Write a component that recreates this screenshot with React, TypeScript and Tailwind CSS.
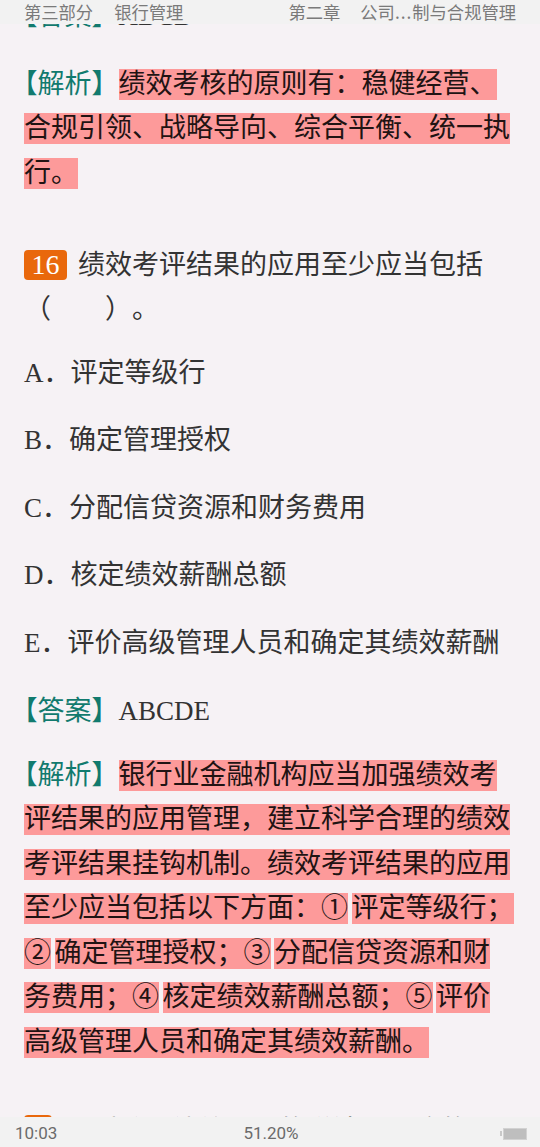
import React from 'react';

const textFont = "font-['Liberation_Serif','Noto_Sans_CJK_SC',serif]";

function Tag({ children }: { children: React.ReactNode }) {
  return (
    <span className="leading-[31px] text-[#117a6e]">
      <span className="[font-feature-settings:'halt']">【</span>
      {children}】
    </span>
  );
}

function Hl({ children, gap }: { children: React.ReactNode; gap?: boolean }) {
  return (
    <span className={`h-[31px] leading-[31px] bg-[#fd9a9a] text-[#211313] ${gap ? 'ml-[3.5px]' : ''}`}>
      {children}
    </span>
  );
}

function Row({ children, className = '' }: { children: React.ReactNode; className?: string }) {
  return <div className={`flex items-center h-[44.5px] whitespace-nowrap ${className}`}>{children}</div>;
}

function Badge({ n }: { n: number }) {
  return (
    <span className="flex items-center justify-center w-[43px] h-[30px] rounded-[4px] bg-[#e9680c] text-white text-[28px] leading-none font-['Liberation_Serif',serif]">
      {n}
    </span>
  );
}

export default function App() {
  const options = [
    'A．评定等级行',
    'B．确定管理授权',
    'C．分配信贷资源和财务费用',
    'D．核定绩效薪酬总额',
    'E．评价高级管理人员和确定其绩效薪酬',
  ];

  return (
    <div className="w-[540px] h-[1147px] flex flex-col overflow-hidden bg-[#f6f2f5]">
      {/* top header */}
      <div className="relative z-10 h-6 shrink-0 bg-[#f2f2f2] flex items-center justify-between pl-6 pr-[24px] text-[17.3px] leading-none text-[#7a7a7a] font-['Noto_Sans_CJK_SC',sans-serif] [text-spacing-trim:space-all]">
        <div className="flex gap-[21px]">
          <span>第三部分</span>
          <span>银行管理</span>
        </div>
        <div className="flex gap-[20px]">
          <span>第二章</span>
          <span>
            公司<span className="tracking-[1px]">...</span>制与合规管理
          </span>
        </div>
      </div>

      {/* page */}
      <div className={`flex-1 overflow-hidden pl-6 text-[27px] text-[#333333] ${textFont} [text-spacing-trim:space-all]`}>
        <Row className="-mt-[30px]">
          <Tag>答案</Tag>
          <span className="leading-[31px]">ABCD</span>
        </Row>

        <div className="mt-[23.5px]">
          <Row>
            <Tag>解析</Tag>
            <Hl>绩效考核的原则有：稳健经营、</Hl>
          </Row>
          <Row>
            <Hl>合规引领、战略导向、综合平衡、统一执</Hl>
          </Row>
          <Row>
            <Hl>行。</Hl>
          </Row>
        </div>

        <div className="mt-[47.5px]">
          <Row className="gap-[11px]">
            <Badge n={16} />
            <span className="leading-[31px]">绩效考评结果的应用至少应当包括</span>
          </Row>
          <Row>
            <span className="leading-[31px]">（　　）。</span>
          </Row>
        </div>

        <div className="mt-[19px] flex flex-col gap-[23px]">
          {options.map((o) => (
            <Row key={o}>
              <span className="leading-[31px]">{o}</span>
            </Row>
          ))}
        </div>

        <Row className="mt-[23.5px]">
          <Tag>答案</Tag>
          <span className="leading-[31px]">ABCDE</span>
        </Row>

        <div className="mt-[19.5px]">
          <Row>
            <Tag>解析</Tag>
            <Hl>银行业金融机构应当加强绩效考</Hl>
          </Row>
          <Row>
            <Hl>评结果的应用管理，建立科学合理的绩效</Hl>
          </Row>
          <Row>
            <Hl>考评结果挂钩机制。绩效考评结果的应用</Hl>
          </Row>
          <Row>
            <Hl>至少应当包括以下方面：①</Hl>
            <Hl gap>评定等级行；</Hl>
          </Row>
          <Row>
            <Hl>②</Hl>
            <Hl gap>确定管理授权；③</Hl>
            <Hl gap>分配信贷资源和财</Hl>
          </Row>
          <Row>
            <Hl>务费用；④</Hl>
            <Hl gap>核定绩效薪酬总额；⑤</Hl>
            <Hl gap>评价</Hl>
          </Row>
          <Row>
            <Hl>高级管理人员和确定其绩效薪酬。</Hl>
          </Row>
        </div>

        <Row className="mt-[43px] gap-[11px]">
          <Badge n={17} />
          <span className="leading-[31px] pt-[3px]">下列关于绩效考评的说法，正确的是（　　）。</span>
        </Row>
      </div>

      {/* bottom status */}
      <div className="relative z-10 h-[30px] shrink-0 bg-[#f2f2f2] flex items-center justify-between pl-[15px] pr-[13px] pt-[3px] text-[17px] leading-none text-[#6b6b6b] font-['Roboto',sans-serif]">
        <span className="w-[60px]">10:03</span>
        <span>51.20%</span>
        <div className="w-[60px] flex items-center justify-end">
          <div className="w-[2px] h-[5px] bg-[#c9c9c9] mr-px" />
          <div className="w-[24px] h-[12px] bg-[#bebebe] border border-[#d2d2d2]" />
        </div>
      </div>
    </div>
  );
}
